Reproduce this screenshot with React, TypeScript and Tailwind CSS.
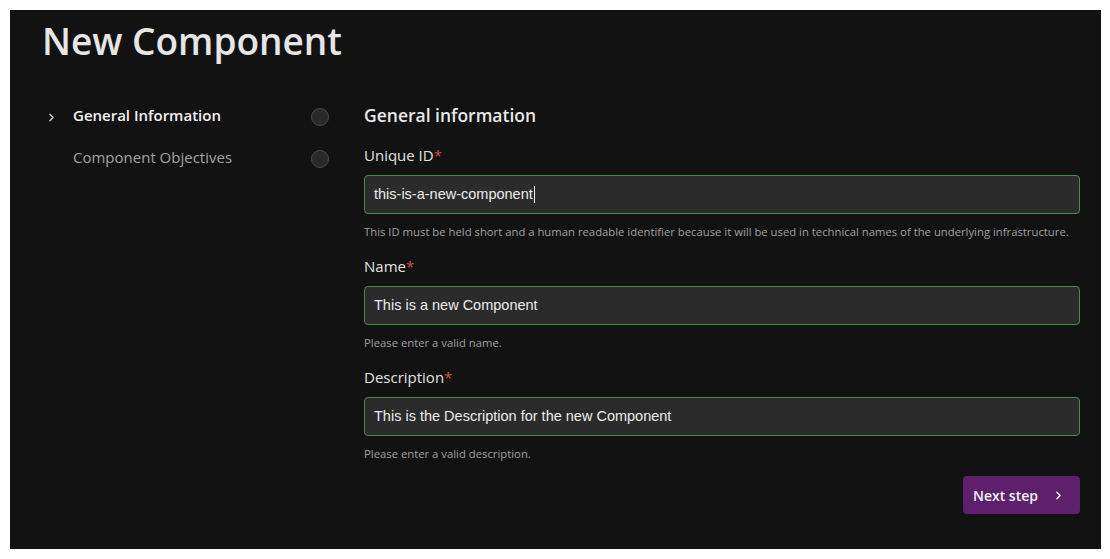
import { ChevronRight } from "lucide-react";

type Field = {
  label: string;
  value: string;
  help: string;
  caret?: boolean;
};

const fields: Field[] = [
  {
    label: "Unique ID",
    value: "this-is-a-new-component",
    help: "This ID must be held short and a human readable identifier because it will be used in technical names of the underlying infrastructure.",
    caret: true,
  },
  {
    label: "Name",
    value: "This is a new Component",
    help: "Please enter a valid name.",
  },
  {
    label: "Description",
    value: "This is the Description for the new Component",
    help: "Please enter a valid description.",
  },
];

const steps = [
  { name: "General Information", active: true },
  { name: "Component Objectives", active: false },
];

const sans = "font-['Open_Sans','Noto_Sans',sans-serif]";

export default function App() {
  return (
    <div className={`min-h-screen bg-white p-[10px] pr-[9px] ${sans}`}>
      <div className="h-[539px] bg-[#121212] pl-[32px] pr-[21px] pt-[8px]">
        <h1 className="text-[37px] leading-[46px] font-semibold text-[#e6e6e6]">
          New Component
        </h1>

        <div className="mt-[32px] flex gap-[34px]">
          {/* stepper */}
          <div className="w-[288px]">
            {steps.map((step) => (
              <div key={step.name} className="flex h-[42px] items-center">
                <div className="flex w-[31px] items-center pl-[3px]">
                  {step.active && (
                    <ChevronRight className="h-[13px] w-[13px] text-[#d0d0d0]" strokeWidth={2.5} />
                  )}
                </div>
                <span
                  className={`mb-[3px] flex-1 text-[15px] ${
                    step.active ? "font-semibold text-[#f2f2f2]" : "text-[#a3a3a3]"
                  }`}
                >
                  {step.name}
                </span>
                <div className="mr-px h-[18px] w-[18px] rounded-full border border-[#4a4a4a] bg-[#2a2a2a]" />
              </div>
            ))}
          </div>

          {/* form */}
          <div className="flex-1 pt-[7px]">
            <h2 className="text-[17.5px] leading-[24px] font-semibold text-[#e8e8e8]">
              General information
            </h2>
            <div className="mt-[17px] flex flex-col gap-[16px]">
              {fields.map((field) => (
                <div key={field.label}>
                  <label className="block text-[15px] leading-[22px] text-[#e2e2e2]">
                    {field.label}
                    <span className="text-[#c8504a]">*</span>
                  </label>
                  <div className="mt-[9px] flex h-[39px] items-center rounded-[4px] border border-[#4b8a4b] bg-[#2b2b2b] px-[9px] font-['Liberation_Sans',Arial,sans-serif] text-[14.5px] text-[#ececec]">
                    {field.value}
                    {field.caret && <span className="ml-px h-[17px] w-px bg-[#f0f0f0]" />}
                  </div>
                  <p className="mt-[10px] text-[11.3px] leading-[15px] text-[#a0a0a0]">
                    {field.help}
                  </p>
                </div>
              ))}
            </div>
            <div className="mt-[15px] flex justify-end">
              <button className="flex h-[38px] items-center gap-[14px] rounded-[4px] bg-[#5e1f6c] pl-[10px] pr-[15px] text-[14px] font-semibold text-[#f2f2f2]">
                Next step
                <ChevronRight className="h-[13px] w-[13px]" strokeWidth={2.5} />
              </button>
            </div>
          </div>
        </div>
      </div>
    </div>
  );
}
